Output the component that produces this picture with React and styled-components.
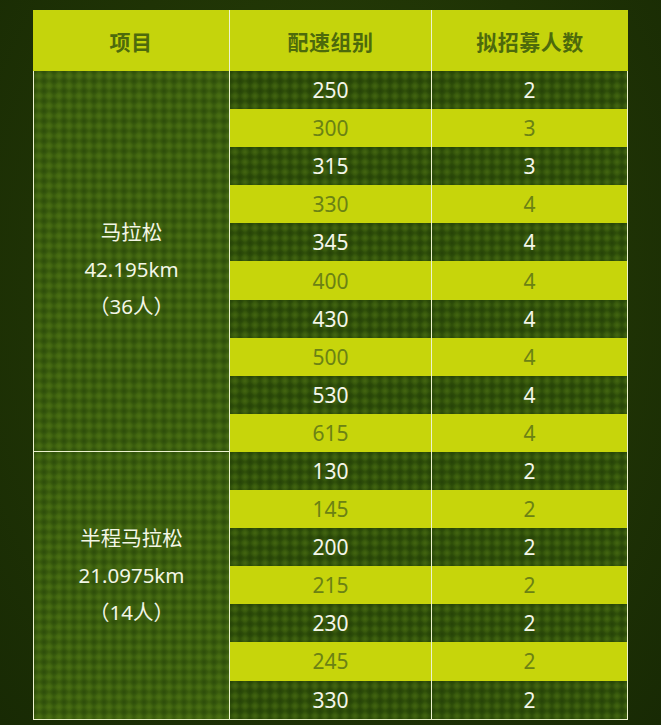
import React from "react";
import styled, { createGlobalStyle } from "styled-components";

const GlobalStyle = createGlobalStyle`
  html, body {
    margin: 0;
    padding: 0;
  }
  body {
    width: 661px;
    height: 725px;
    overflow: hidden;
    background: radial-gradient(ellipse at 50% 40%, #2a4309 0%, #1f3305 60%, #182a04 100%);
    font-family: "Noto Sans", "Noto Sans CJK SC", sans-serif;
  }
`;

const Page = styled.div`
  padding: 10px 0 0 33px;
`;

const Grid = styled.div`
  display: grid;
  width: 595px;
  grid-template-columns: 197px 202px 196px;
  grid-template-rows: 61px repeat(17, 38.1px);
  border-bottom: 1.5px solid #eef3cf;
  box-sizing: border-box;
`;

const texture = `
  background-image:
    radial-gradient(circle at center, rgba(105, 145, 30, 0.35) 0, rgba(105, 145, 30, 0) 4.5px),
    radial-gradient(circle at center, rgba(10, 30, 0, 0.28) 0, rgba(10, 30, 0, 0) 4.5px);
  background-size: 10px 10px, 10px 10px;
  background-position: 0 0, 5px 5px;
`;

const HeadCell = styled.div`
  background: #c5d40c;
  color: #4d6a0c;
  font-size: 21px;
  font-weight: 700;
  display: flex;
  align-items: center;
  justify-content: center;
  letter-spacing: 0.5px;
  border-right: ${(p) => (p.$last ? "none" : "1.5px solid #eef3cf")};
`;

const GroupCell = styled.div`
  grid-column: 1;
  ${texture}
  background-color: #3b5e0e;
  border-left: 1.5px solid #eef3cf;
  border-right: 1.5px solid #eef3cf;
  border-bottom: ${(p) => (p.$last ? "none" : "1.5px solid #eef3cf")};
  color: #f3f6e6;
  font-size: 20.5px;
  line-height: 37px;
  display: flex;
  flex-direction: column;
  align-items: center;
  justify-content: center;
  text-align: center;
  padding-top: ${(p) => (p.$shift > 0 ? p.$shift : 0)}px;
  padding-bottom: ${(p) => (p.$shift < 0 ? -p.$shift : 0)}px;
`;

const Cell = styled.div`
  display: flex;
  align-items: center;
  justify-content: center;
  font-size: 21px;
  ${(p) =>
    p.$light
      ? `
    background: #c7d50b;
    color: #6b8214;
  `
      : `
    ${texture}
    background-color: #30500a;
    color: #f4f6ea;
  `}
  border-right: 1.5px solid #eef3cf;
`;

const groups = [
  {
    name: "马拉松",
    dist: "42.195km",
    count: "（36人）",
    shift: 18,
    rows: [
      ["250", "2"],
      ["300", "3"],
      ["315", "3"],
      ["330", "4"],
      ["345", "4"],
      ["400", "4"],
      ["430", "4"],
      ["500", "4"],
      ["530", "4"],
      ["615", "4"],
    ],
  },
  {
    name: "半程马拉松",
    dist: "21.0975km",
    count: "（14人）",
    shift: -20,
    rows: [
      ["130", "2"],
      ["145", "2"],
      ["200", "2"],
      ["215", "2"],
      ["230", "2"],
      ["245", "2"],
      ["330", "2"],
    ],
  },
];

export default function App() {
  let rowIndex = 0;
  return (
    <>
      <GlobalStyle />
      <Page>
        <Grid>
          <HeadCell>项目</HeadCell>
          <HeadCell>配速组别</HeadCell>
          <HeadCell $last>拟招募人数</HeadCell>
          {groups.map((g, gi) => {
            const start = rowIndex;
            rowIndex += g.rows.length;
            return (
              <React.Fragment key={g.name}>
                <GroupCell
                  $shift={g.shift}
                  $last={gi === groups.length - 1}
                  style={{ gridRow: `${start + 2} / span ${g.rows.length}` }}
                >
                  <span>{g.name}</span>
                  <span>{g.dist}</span>
                  <span>{g.count}</span>
                </GroupCell>
                {g.rows.map(([pace, num], i) => {
                  const light = (start + i) % 2 === 1;
                  return (
                    <React.Fragment key={i}>
                      <Cell
                        $light={light}
                        style={{ gridColumn: 2, gridRow: start + i + 2 }}
                      >
                        {pace}
                      </Cell>
                      <Cell
                        $light={light}
                        style={{ gridColumn: 3, gridRow: start + i + 2 }}
                      >
                        {num}
                      </Cell>
                    </React.Fragment>
                  );
                })}
              </React.Fragment>
            );
          })}
        </Grid>
      </Page>
    </>
  );
}
